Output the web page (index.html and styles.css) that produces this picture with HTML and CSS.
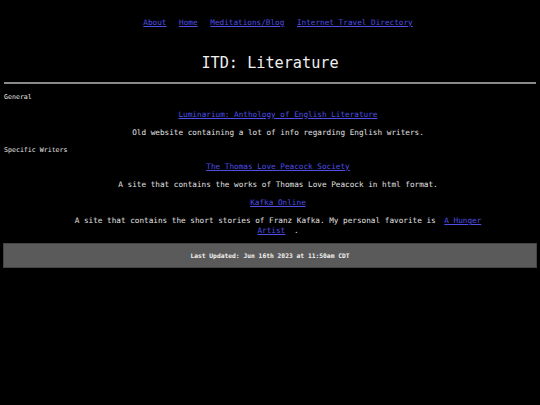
FILE: index.html
```html
<!DOCTYPE html>
<html lang="en">
<head>
<meta charset="utf-8">
<title>ITD: Literature</title>
<link rel="stylesheet" href="styles.css">
</head>
<body>
<nav class="nav">
  <a href="#">About</a> <a href="#">Home</a> <a href="#">Meditations/Blog</a> <a href="#">Internet Travel Directory</a>
</nav>
<h1 class="title">ITD: Literature</h1>
<hr class="rule">
<main class="content">
  <h2 class="section">General</h2>
  <div class="entries">
    <p class="entry"><a href="#">Luminarium: Anthology of English Literature</a></p>
    <p class="entry">Old website containing a lot of info regarding English writers.</p>
  </div>
  <h2 class="section">Specific Writers</h2>
  <div class="entries">
    <p class="entry"><a href="#">The Thomas Love Peacock Society</a></p>
    <p class="entry">A site that contains the works of Thomas Love Peacock in html format.</p>
    <p class="entry"><a href="#">Kafka Online</a></p>
    <p class="entry narrow">A site that contains the short stories of Franz Kafka. My personal favorite is <a class="inline" href="#">A Hunger Artist</a> .</p>
  </div>
</main>
<footer class="footer">Last Updated: Jun 16th 2023 at 11:50am CDT</footer>
</body>
</html>
```
FILE: styles.css
```css
html, body {
  background: #000;
}
body {
  margin: 0 3px;
  color: #e2e2e2;
  font-family: "DejaVu Sans Mono", "Liberation Mono", monospace;
  font-size: 7.7px;
  line-height: 9px;
}
a {
  color: #4f4fe6;
  text-decoration: underline;
}
.nav {
  margin: 18px 0 0 16px;
  text-align: center;
  word-spacing: 8px;
}
.nav a {
  word-spacing: 0;
}
.title {
  margin: 27px 0 0;
  font-size: 15.2px;
  line-height: 18px;
  font-weight: normal;
  text-align: center;
  color: #f0f0f0;
}
.rule {
  margin: 10px 1px 0;
  height: 2px;
  border: none;
  background: #8a8a8a;
}
.content {
  display: flex;
  flex-direction: column;
}
.section {
  margin: 9px 0 0 1px;
  font-size: 6.6px;
  line-height: 8px;
  font-weight: normal;
  color: #e8e8e8;
}
.entries {
  display: flex;
  flex-direction: column;
  gap: 9px;
  margin: 8.5px 0 0 16px;
}
.entry {
  margin: 0;
  text-align: center;
}
.narrow {
  max-width: 430px;
  margin: 0 auto;
  line-height: 9.5px;
}
.inline {
  margin: 0 4px;
}
.footer {
  margin-top: 8px;
  height: 23px;
  line-height: 23px;
  background: #5a5a5a;
  border: 1px solid #444;
  text-align: center;
  font-size: 6.3px;
  font-weight: bold;
  color: #f2f2f2;
}
```
